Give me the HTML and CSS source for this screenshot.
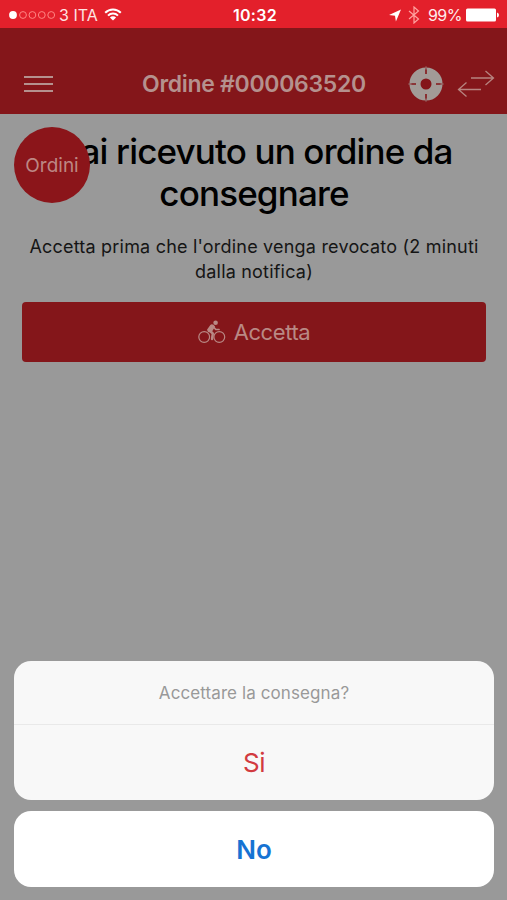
FILE: index.html
```html
<!DOCTYPE html>
<html lang="it">
<head>
<meta charset="utf-8">
<title>Ordine #000063520</title>
<meta name="viewport" content="width=device-width,initial-scale=1">
<link rel="stylesheet" href="styles.css">
</head>
<body>
<!-- Barra di stato -->
<div class="status">
  <div class="status-left">
    <svg class="signal" width="47" height="10" viewBox="0 0 47 10">
      <circle cx="4" cy="5" r="3.9" fill="#fff"/>
      <g fill="none" stroke="#ff8583" stroke-width="1">
        <circle cx="14" cy="5" r="3.4"/><circle cx="23.4" cy="5" r="3.4"/>
        <circle cx="32.8" cy="5" r="3.4"/><circle cx="42.2" cy="5" r="3.4"/>
      </g>
    </svg>
    <span class="carrier">3 ITA</span>
    <svg class="wifi" width="18" height="13" viewBox="0 0 18 13" fill="none" stroke="#fff" stroke-width="2">
      <path d="M1.2 4.7a11 11 0 0 1 15.6 0M4 7.6a7 7 0 0 1 10 0"/>
      <path d="M9 12.6 5.9 9.5a4.4 4.4 0 0 1 6.2 0z" fill="#fff" stroke="none"/>
    </svg>
  </div>
  <span class="clock">10:32</span>
  <div class="status-right">
    <svg width="12" height="13" viewBox="0 0 12 13"><path d="M12 .5 6.9 12.5 6 6.8 0 6z" fill="#fff"/></svg>
    <svg class="bluetooth" width="12" height="18" viewBox="0 0 12 18" fill="none" stroke="#ffa3a0" stroke-width="1.2"><path d="M1 5l9.500 8L6 17V1l4.500 4L1 13"/></svg>
    <span class="percent">99%</span>
    <svg class="battery" width="33" height="14" viewBox="0 0 33 14" fill="#fff"><rect width="30" height="13" rx="1.500" y=".5"/><path d="M31 4.500q2 .5 2 2.500t-2 2.500z"/></svg>
  </div>
</div>

<header>
  <button class="menu" aria-label="Menu"><i></i><i></i><i></i></button>
  <div class="title">Ordine #000063520</div>
  <div class="tools">
    <svg width="36" height="36" viewBox="0 0 36 36">
      <circle cx="18" cy="18" r="11" fill="none" stroke="#a29b97" stroke-width="11"/>
      <path d="M18 1v7M18 28v7M1 18h7M28 18h7" stroke="#84161a" stroke-width="1.600"/>
      <path d="M18 .5v3M18 32.500v3M.5 18h3M32.500 18h3" stroke="#a29b97" stroke-width="1"/>
    </svg>
    <svg class="swap" width="38" height="28" viewBox="0 0 38 28" fill="none" stroke="#b78480" stroke-width="1.300">
      <path d="M14 8h22M28.500 1l8 7-8 7M24 19.500H2M9.500 12.500l-8 7 8 7"/>
    </svg>
  </div>
</header>

<main>
  <div class="badge">Ordini</div>
  <h1>Hai ricevuto un ordine da<br>consegnare</h1>
  <p>Accetta prima che l'ordine venga revocato (2 minuti<br>dalla notifica)</p>
  <button class="accept">
    <svg width="28" height="24" viewBox="0 0 28 24" fill="none" stroke="#b98985">
      <circle cx="6.200" cy="17" r="5.400" stroke-width="1.200"/>
      <circle cx="21.300" cy="17" r="5.400" stroke-width="1.200"/>
      <circle cx="17.600" cy="2.700" r="2.300" fill="#b98985" stroke="none"/>
      <path d="M11.500 10.500l3.300 3-.800 5.500" stroke-width="2.400" stroke-linejoin="round" stroke-linecap="round"/>
      <path d="M15.500 7l2.300 2.500h3.200" stroke-width="1.700" stroke-linecap="round"/>
      <path d="M9 9.800 12.300 5q1.400-1.400 3.200-.2l1.600 1.700-3.600 6-3.500-.5z" fill="#b98985" stroke="none"/>
    </svg>
    <span>Accetta</span>
  </button>
</main>

<!-- Conferma -->
<div class="sheet">
  <div class="group">
    <div class="question">Accettare la consegna?</div>
    <button class="yes">Si</button>
  </div>
  <button class="no">No</button>
</div>
</body>
</html>
```
FILE: styles.css
```css
:root { --red:#e3202b; --dark:#84161a; --pale:#b5918e }
* { box-sizing:border-box }
body { margin:0; height:900px; display:flex; flex-direction:column; overflow:hidden; background:#999; color:#000; font-family:Inter,"Liberation Sans",sans-serif }
button { border:0; padding:0; font:inherit; cursor:pointer }
svg { display:block; flex:none }

.status { height:28px; display:grid; grid-template-columns:1fr auto 1fr; align-items:center; padding:2px 8px 0 9px; background:var(--red); color:#fff; font-size:16px }
.status-left,.status-right { display:flex; align-items:center }
.status-right { justify-content:flex-end }
.carrier { margin-left:3px; color:#ffe4e2 }
.wifi { margin-left:6px; margin-top:-2px }
.clock { padding-left:2px; font-weight:600; letter-spacing:.3px }
.bluetooth { margin-left:7px }
.percent { margin:0 4px 0 8px; letter-spacing:-.5px; color:#ffeceb }

header { height:86px; display:grid; grid-template-columns:107px 1fr 118px; align-items:center; padding:26px 12px 0 24px; background:var(--dark) }
.menu { width:29px; display:grid; gap:5px; background:none }
.menu i { height:2px; background:var(--pale) }
.title { text-align:center; white-space:nowrap; font-size:23px; font-weight:600; letter-spacing:-.3px; color:var(--pale) }
.tools { display:flex; align-items:center; justify-content:flex-end; gap:13px }

main { position:relative; padding:16px 21px 0 22px; text-align:center }
.badge { position:absolute; left:14px; top:13px; width:76px; height:76px; border-radius:50%; background:#8b151a; color:#bd8784; font-size:19px; line-height:77px }
h1 { margin:0; font-size:35px; line-height:42px; font-weight:500; letter-spacing:-.85px; white-space:nowrap }
p { margin:20px 0 18px; font-size:18px; line-height:25px; letter-spacing:.2px; color:#151515; white-space:nowrap }
.accept { width:100%; height:60px; display:flex; align-items:center; justify-content:center; gap:8px; border-radius:4px; background:var(--dark); color:#b98985; font-size:22px; letter-spacing:-.4px }

.sheet { margin:auto 13px 13px 14px; display:grid; gap:11px }
.group,.no { border-radius:17px; overflow:hidden }
.group { background:#f8f8f8; text-align:center }
.question { height:64px; line-height:64px; border-bottom:1px solid #e9e9e9; font-size:17px; letter-spacing:.1px; color:#999 }
.yes { width:100%; height:75px; background:none; color:#d23b40; font-size:26px; letter-spacing:-.5px }
.no { height:76px; background:#fff; color:#1673d3; font-size:26px; font-weight:600 }
```
